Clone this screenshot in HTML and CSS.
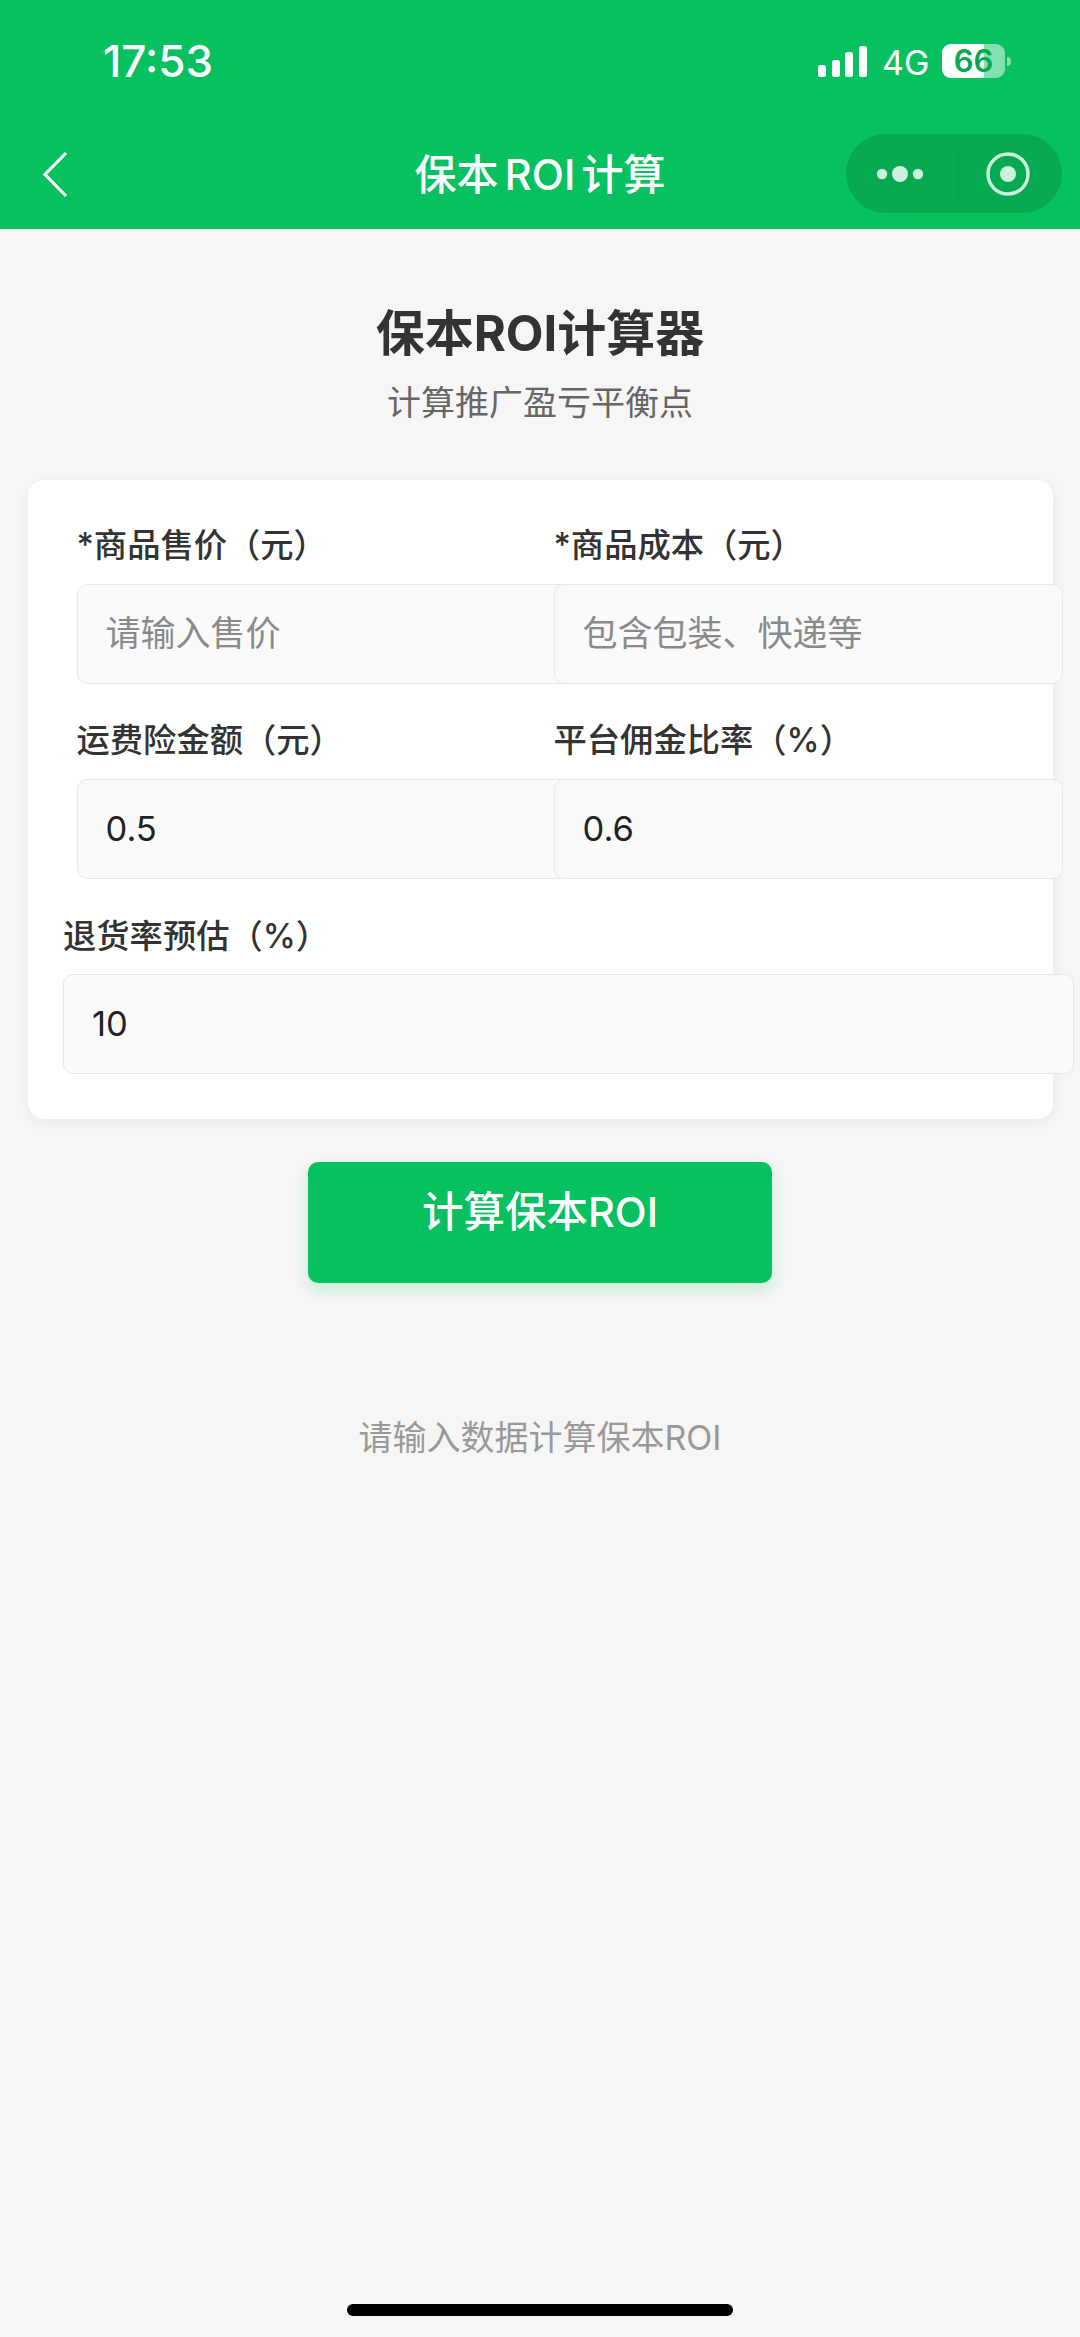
FILE: index.html
```html
<!DOCTYPE html>
<html lang="zh-CN">
<head>
<meta charset="utf-8">
<title>保本ROI计算</title>
<link rel="stylesheet" href="styles.css">
</head>
<body>
<div class="phone">
  <header class="topbar">
    <div class="status">
      <span class="time">17:53</span>
      <div class="status-right">
        <div class="signal"><i class="b1"></i><i class="b2"></i><i class="b3"></i><i class="b4"></i></div>
        <span class="net">4G</span>
        <div class="battery"><div class="battery-body"><div class="battery-fill"></div><span class="battery-num">66</span></div><div class="battery-nub"></div></div>
      </div>
    </div>
    <nav class="nav">
      <svg class="back" width="30" height="50" viewBox="0 0 30 50"><path d="M25 3 L4 24.5 L25 46" fill="none" stroke="#fff" stroke-width="3.2"/></svg>
      <h1 class="nav-title">保本 ROI 计算</h1>
      <div class="capsule">
        <svg class="cap-dots" width="108" height="79" viewBox="0 0 108 79"><circle cx="36" cy="40" r="5.2"/><circle cx="54" cy="40" r="8"/><circle cx="72" cy="40" r="5.2"/></svg>
        <div class="cap-div"></div>
        <svg class="cap-target" width="108" height="79" viewBox="0 0 108 79"><circle class="ring" cx="54" cy="40" r="20"/><circle cx="54" cy="40" r="8"/></svg>
      </div>
    </nav>
  </header>
  <main class="page">
    <div class="head">
      <h2 class="title">保本ROI计算器</h2>
      <p class="subtitle">计算推广盈亏平衡点</p>
    </div>
    <section class="card">
      <div class="row">
        <div class="field">
          <div class="label">*商品售价（元）</div>
          <div class="input half placeholder">请输入售价</div>
        </div>
        <div class="field">
          <div class="label">*商品成本（元）</div>
          <div class="input half placeholder">包含包装、快递等</div>
        </div>
      </div>
      <div class="row">
        <div class="field">
          <div class="label">运费险金额（元）</div>
          <div class="input half">0.5</div>
        </div>
        <div class="field">
          <div class="label">平台佣金比率（%）</div>
          <div class="input half">0.6</div>
        </div>
      </div>
      <div class="field full">
        <div class="label">退货率预估（%）</div>
        <div class="input wide">10</div>
      </div>
    </section>
    <button class="calc">计算保本ROI</button>
    <p class="hint">请输入数据计算保本ROI</p>
  </main>
  <div class="home"></div>
</div>
</body>
</html>
```
FILE: styles.css
```css
* { box-sizing: border-box; }
html, body { margin: 0; padding: 0; }
body { font-family: "Inter", "Noto Sans CJK SC", sans-serif; background: #f6f6f6; color: #333; }
.phone { width: 1080px; height: 2337px; display: flex; flex-direction: column; overflow: hidden; position: relative; background: #f6f6f6; }

.topbar { height: 229px; background: #07c160; color: #fff; flex: none; }
.status { height: 122px; display: flex; justify-content: space-between; align-items: flex-start; }
.time { margin: 36px 0 0 103px; font-size: 44px; line-height: 50px; font-weight: 500; }
.status-right { display: flex; align-items: flex-start; margin: 44px 69px 0 0; }
.signal { display: flex; align-items: flex-end; gap: 5.5px; height: 33px; width: 49px; }
.signal i { display: block; width: 8px; background: #fff; border-radius: 2.5px; }
.b1 { height: 12px; } .b2 { height: 17px; } .b3 { height: 25px; } .b4 { height: 31px; }
.net { margin-left: 15px; font-size: 34px; line-height: 38px; width: 45px; }
.battery { margin-left: 15px; display: flex; align-items: center; height: 34px; }
.battery-body { position: relative; width: 63px; height: 34px; border-radius: 9px; background: rgba(255,255,255,.5); }
.battery-fill { width: 42px; height: 34px; background: #fff; border-radius: 9px 0 0 9px; }
.battery-num { position: absolute; left: 0; right: 0; top: 0; text-align: center; color: #07a653; font-size: 31px; line-height: 34px; font-weight: 600; }
.battery-nub { width: 4px; height: 9px; margin-left: 2px; background: rgba(255,255,255,.5); border-radius: 0 5px 5px 0; }

.nav { height: 107px; position: relative; display: flex; align-items: flex-start; justify-content: center; }
.back { position: absolute; left: 41px; top: 28px; }
.nav-title { margin: 28px 0 0; font-size: 42px; line-height: 50px; font-weight: 500; word-spacing: -5px; }
.capsule { position: absolute; left: 846px; top: 12px; width: 216px; height: 79px; border-radius: 40px; background: #06a850; display: flex; align-items: center; }
.capsule svg { fill: #cdf0dc; display: block; }
.cap-div { width: 1px; height: 52px; background: #0ab25a; margin-left: -1px; }
.cap-target .ring { fill: none; stroke: #cdf0dc; stroke-width: 3.5; }

.page { display: flex; flex-direction: column; align-items: center; flex: 1; }
.head { text-align: center; padding-top: 72px; }
.title { margin: 0; font-size: 49px; line-height: 66px; font-weight: 700; color: #333; }
.subtitle { margin: 14px 0 0; font-size: 34px; line-height: 44px; color: #666; }
.card { width: 1025px; height: 639px; margin-top: 55px; padding: 43px 35.5px 0; background: #fff; border-radius: 16px; box-shadow: 0 3px 14px rgba(0,0,0,.05); }
.row { display: grid; grid-template-columns: 1fr 1fr; margin: 0 -13.5px 29px 13.5px; height: 166px; }
.field { min-width: 0; }
.label { font-size: 33.3px; line-height: 44px; font-weight: 500; color: #333; margin-bottom: 17px; }
.full .label { padding-top: 1px; margin-bottom: 16px; }
.input { height: 100px; border: 1.5px solid #e8e8e8; border-radius: 10px; background: #fafafa; font-size: 34.5px; line-height: 97px; padding-left: 28px; color: #222; position: relative; }
.half { width: 509px; }
.wide { width: 1011px; }
.placeholder { color: #8a8a8a; font-size: 35px; }

.calc { width: 464px; height: 121px; margin-top: 43px; flex: none; border: 0; border-radius: 10px; background: #07c160; color: #fff; font: inherit; font-size: 41.5px; font-weight: 500; padding: 0 0 28px; box-shadow: 0 6px 16px rgba(7,193,96,.2); }
.hint { margin: 130px 0 0; font-size: 34px; line-height: 50px; color: #999; }

.home { position: absolute; left: 347px; bottom: 21px; width: 386px; height: 12px; border-radius: 6px; background: #000; }
```
